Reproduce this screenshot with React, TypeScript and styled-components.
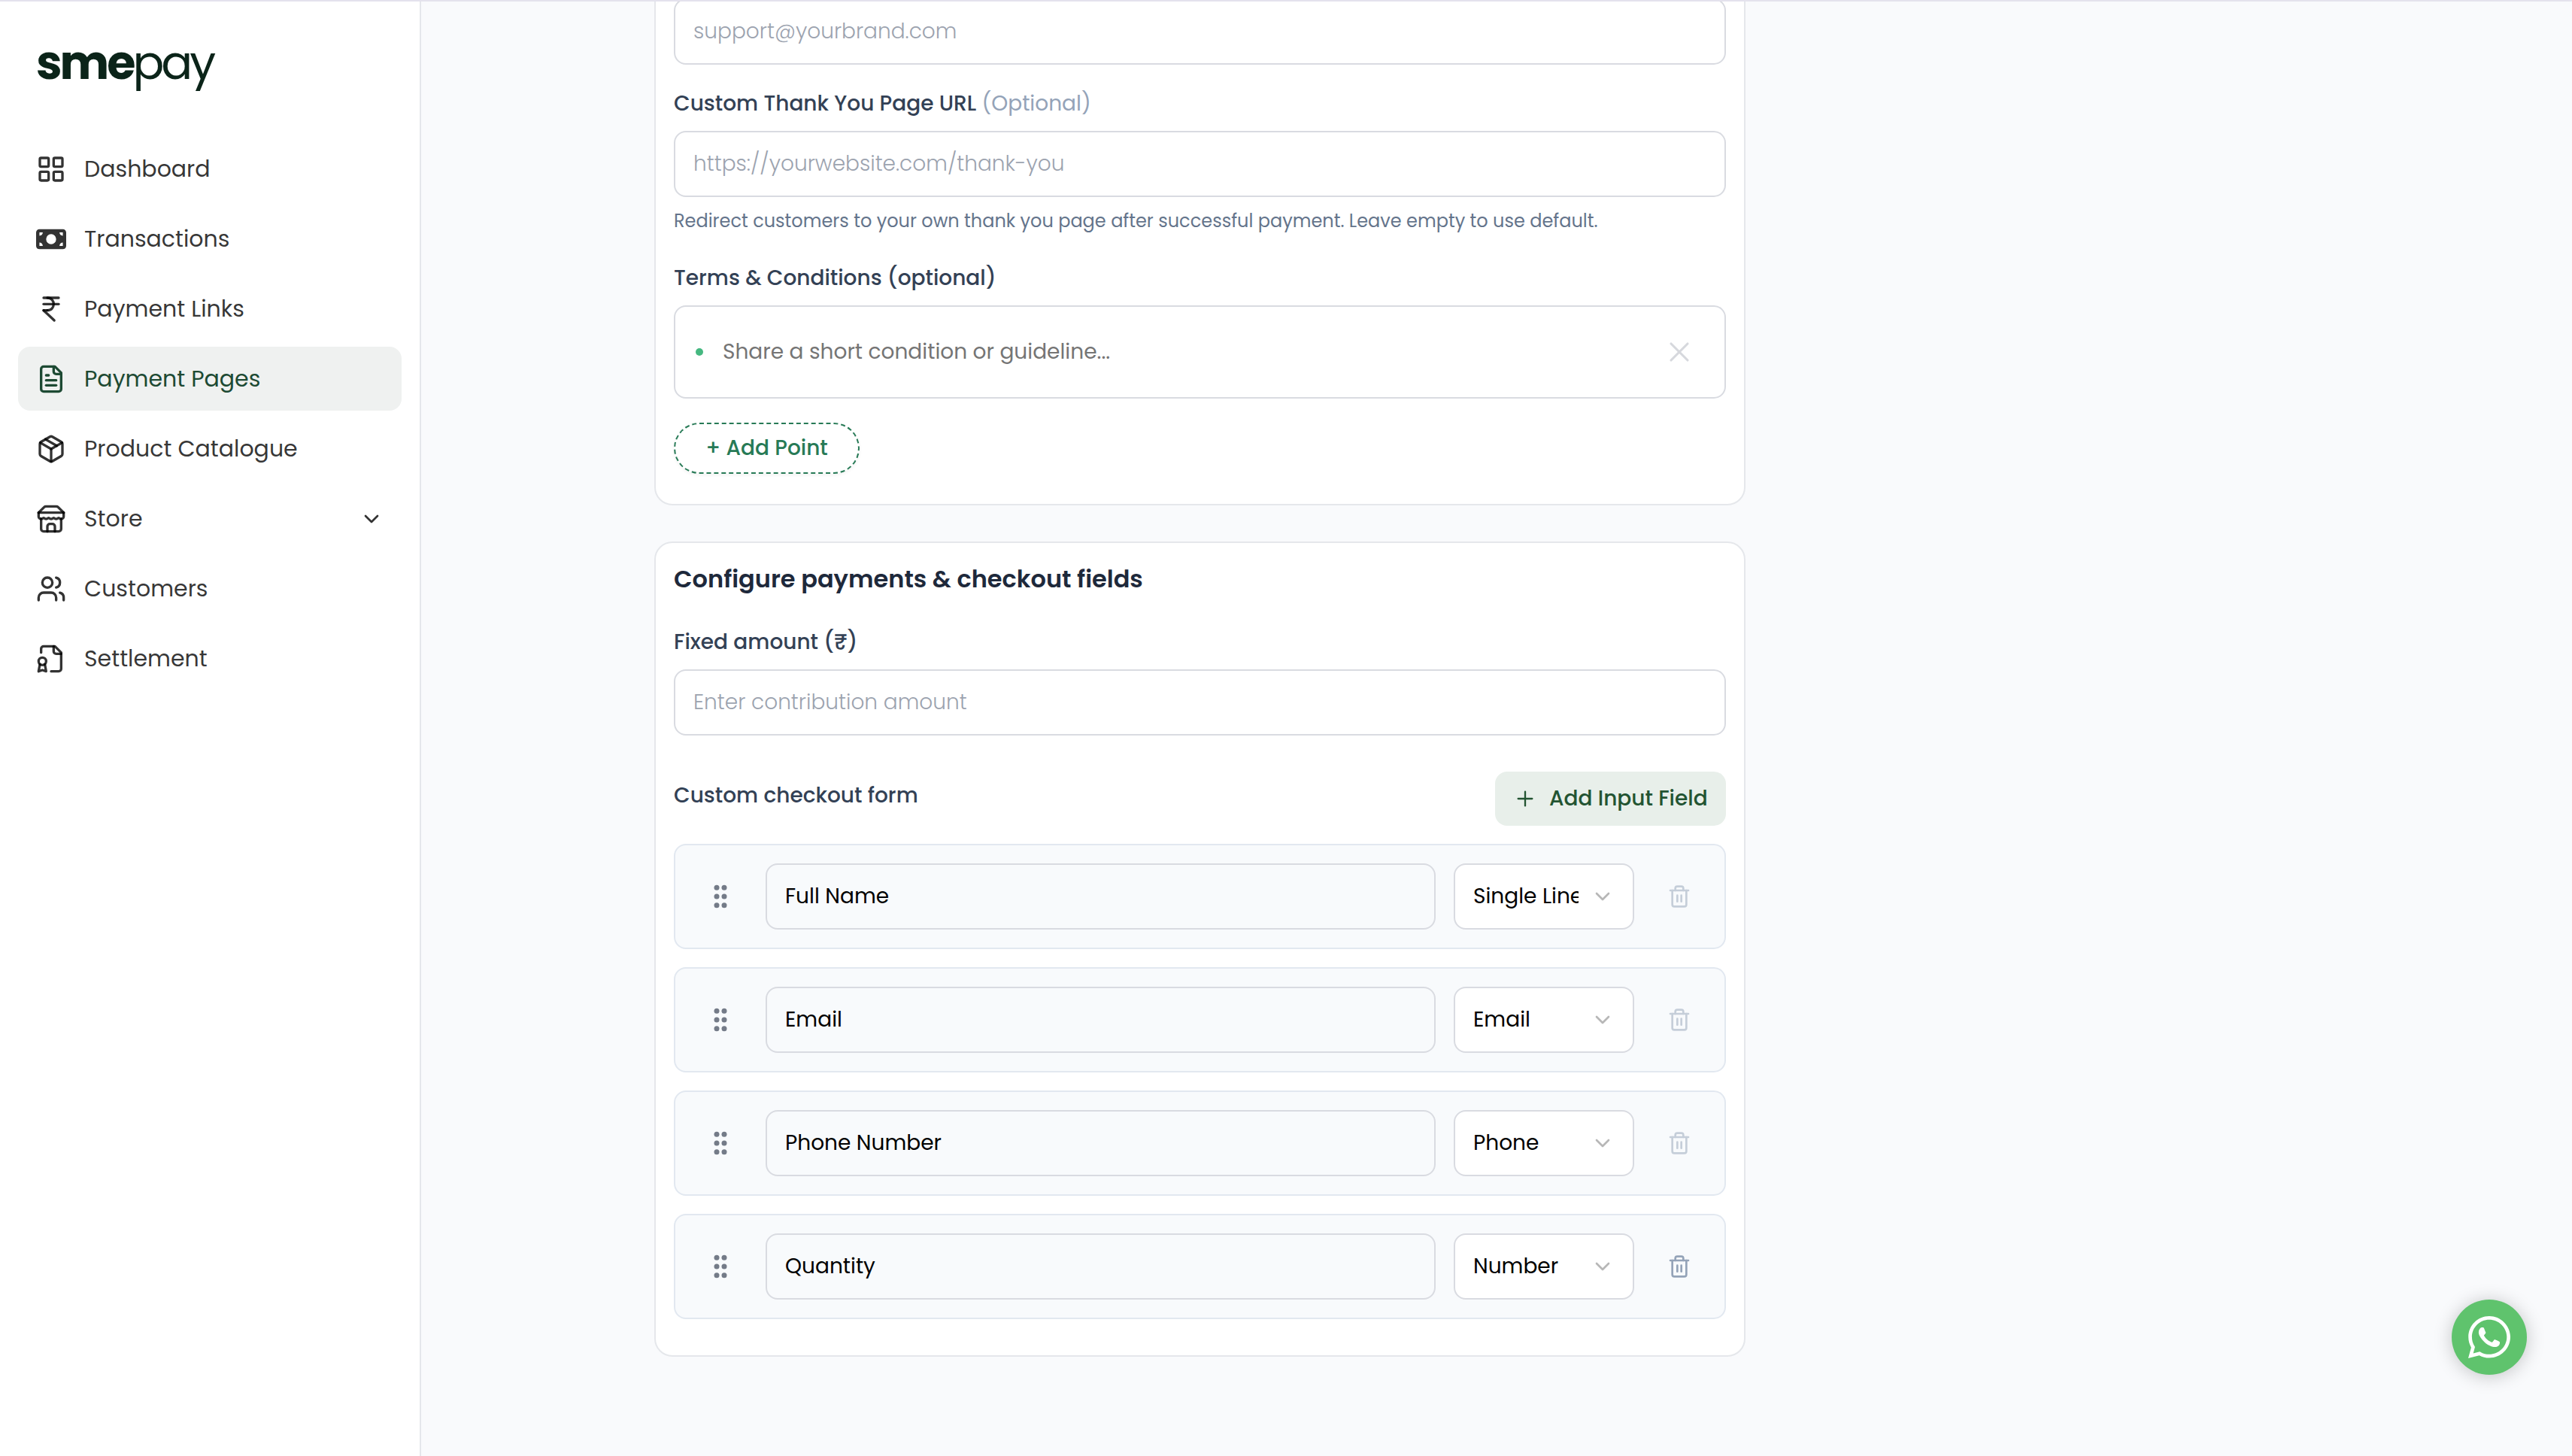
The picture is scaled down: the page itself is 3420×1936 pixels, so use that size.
import React from 'react';
import styled, { createGlobalStyle, css } from 'styled-components';
import { ChevronDown, Plus, X, Trash2, IndianRupee } from 'lucide-react';
import { FaMoneyBill } from 'react-icons/fa6';
import { FaWhatsapp } from 'react-icons/fa';

const Global = createGlobalStyle`
  *, *::before, *::after { box-sizing: border-box; }
  html, body, #root { height: 100%; }
  body {
    margin: 0;
    background: #f9fafc;
    font-family: Poppins, Inter, 'Noto Sans', sans-serif;
    font-size: 28px;
    line-height: 42px;
    color: #000;
  }
`;

const Shell = styled.div`
  display: flex;
  flex-direction: column;
  height: 1936px;
  overflow: hidden;
  border-top: 2px solid #e4e2ed;
`;
const Body = styled.div`
  display: flex;
  flex: 1;
  min-height: 0;
`;
const Text = styled.span`
  white-space: nowrap;
`;

/* Sidebar */
const Sidebar = styled.aside`
  flex: none;
  width: 560px;
  padding: 50px 24px 0;
  background: #fff;
  border-right: 2px solid #e5e7eb;
`;
const Logo = styled.div`
  display: flex;
  height: 64px;
  margin: 0 0 66px 24px;
  font-size: 62px;
  line-height: 64px;
  color: #0b2419;
`;
const LogoStrong = styled.span`
  font-weight: 700;
  letter-spacing: -3px;
`;
const LogoLight = styled.span`
  margin-left: -1px;
  font-weight: 400;
  letter-spacing: -4px;
`;
const Nav = styled.nav`
  display: flex;
  flex-direction: column;
  gap: 8px;
`;
const NavItem = styled.a<{ $active?: boolean }>`
  display: flex;
  align-items: center;
  gap: 24px;
  height: 85px;
  padding: 0 24px;
  border-radius: 16px;
  font-size: 30px;
  color: rgba(0, 0, 0, 0.8);
  ${p => p.$active && css`
    background: #eff1f0;
    color: #1d4a33;
  `}
`;
const NavLabel = styled(Text)`
  flex: 1;
`;
const IconSvg = styled.svg`
  flex: none;
  width: 40px;
  height: 40px;
  fill: none;
  stroke: currentColor;
  stroke-width: 2;
  stroke-linecap: round;
  stroke-linejoin: round;
`;

function StrokeIcon({ paths }: { paths: string[] }) {
  return (
    <IconSvg viewBox="0 0 24 24">
      {paths.map(d => <path key={d} d={d} />)}
    </IconSvg>
  );
}

const GridIcon = () => (
  <IconSvg viewBox="0 0 24 24">
    <rect x="3" y="3" width="7" height="7" rx="1" />
    <rect x="14" y="3" width="7" height="7" rx="1" />
    <rect x="14" y="14" width="7" height="7" rx="1" />
    <rect x="3" y="14" width="7" height="7" rx="1" />
  </IconSvg>
);

const pagePaths = [
  'M15 2H6a2 2 0 0 0-2 2v16a2 2 0 0 0 2 2h12a2 2 0 0 0 2-2V7Z',
  'M14 2v4a2 2 0 0 0 2 2h4',
  'M10 9H8',
  'M16 13H8',
  'M16 17H8',
];
const boxPaths = [
  'm7.5 4.27 9 5.15',
  'M21 8a2 2 0 0 0-1-1.73l-7-4a2 2 0 0 0-2 0l-7 4A2 2 0 0 0 3 8v8a2 2 0 0 0 1 1.73l7 4a2 2 0 0 0 2 0l7-4A2 2 0 0 0 21 16Z',
  'm3.3 7 8.7 5 8.7-5',
  'M12 22V12',
];
const storePaths = [
  'm2 7 4.41-4.41A2 2 0 0 1 7.83 2h8.34a2 2 0 0 1 1.42.59L22 7',
  'M4 12v8a2 2 0 0 0 2 2h12a2 2 0 0 0 2-2v-8',
  'M15 22v-4a2 2 0 0 0-2-2h-2a2 2 0 0 0-2 2v4',
  'M2 7h20',
  'M22 7v3a2 2 0 0 1-2 2a2.7 2.7 0 0 1-1.59-.63.7.7 0 0 0-.82 0A2.7 2.7 0 0 1 16 12a2.7 2.7 0 0 1-1.59-.63.7.7 0 0 0-.82 0A2.7 2.7 0 0 1 12 12a2.7 2.7 0 0 1-1.59-.63.7.7 0 0 0-.82 0A2.7 2.7 0 0 1 8 12a2.7 2.7 0 0 1-1.59-.63.7.7 0 0 0-.82 0A2.7 2.7 0 0 1 4 12a2 2 0 0 1-2-2V7',
];
const usersPaths = [
  'M16 21v-2a4 4 0 0 0-4-4H6a4 4 0 0 0-4 4v2',
  'M9 3a4 4 0 1 0 0 8a4 4 0 1 0 0-8Z',
  'M22 21v-2a4 4 0 0 0-3-3.87',
  'M16 3.13a4 4 0 0 1 0 7.75',
];
const badgePaths = [
  'M12 22h6a2 2 0 0 0 2-2V7l-5-5H6a2 2 0 0 0-2 2v3',
  'M14 2v4a2 2 0 0 0 2 2h4',
  'M5 17a3 3 0 1 0 0-6 3 3 0 0 0 0 6Z',
  'M7 16.5 8 22l-3-1-3 1 1-5.5',
];

const navItems = [
  { label: 'Dashboard', icon: <GridIcon /> },
  { label: 'Transactions', icon: <FaMoneyBill size={40} /> },
  { label: 'Payment Links', icon: <IndianRupee size={40} /> },
  { label: 'Payment Pages', icon: <StrokeIcon paths={pagePaths} />, active: true },
  { label: 'Product Catalogue', icon: <StrokeIcon paths={boxPaths} /> },
  { label: 'Store', icon: <StrokeIcon paths={storePaths} />, expandable: true },
  { label: 'Customers', icon: <StrokeIcon paths={usersPaths} /> },
  { label: 'Settlement', icon: <StrokeIcon paths={badgePaths} /> },
];

/* Form */
const Main = styled.main`
  flex: 1;
  display: flex;
  flex-direction: column;
  gap: 48px;
  min-width: 0;
  padding-left: 310px;
`;
const Card = styled.section<{ $scrolled?: boolean }>`
  display: flex;
  flex-direction: column;
  flex: none;
  width: 1451px;
  margin-top: ${p => (p.$scrolled ? '-30px' : 0)};
  padding: 24px 24px ${p => (p.$scrolled ? '40px' : '48px')};
  background: #fff;
  border: 2px solid #e5e7eb;
  border-radius: 24px;
`;
const Label = styled.div<{ $top?: number }>`
  margin-top: ${p => p.$top ?? 0}px;
  font-weight: 500;
  color: #334155;
`;
const Optional = styled(Text)`
  font-weight: 400;
  color: #94a3b8;
`;
const Field = styled.div<{ $top?: number }>`
  display: flex;
  align-items: center;
  height: 88px;
  margin-top: ${p => p.$top ?? 0}px;
  padding: 0 24px;
  border: 2px solid #d9dbe1;
  border-radius: 16px;
`;
const Placeholder = styled(Text)`
  font-weight: 300;
  color: #9ca3af;
`;
const Helper = styled.div`
  margin-top: 14px;
  font-size: 24px;
  line-height: 36px;
  color: #64748b;
`;
const TermRow = styled(Field)`
  height: 124px;
  padding: 0 38px 0 27px;
  color: #757575;
`;
const Bullet = styled.span`
  flex: none;
  width: 10px;
  height: 10px;
  margin-right: 26px;
  border-radius: 50%;
  background: #45b880;
`;
const TermText = styled(Text)`
  flex: 1;
`;
const AddPoint = styled.button`
  align-self: flex-start;
  width: 247px;
  height: 68px;
  margin-top: 32px;
  padding: 0;
  border: 2px dashed #277a56;
  border-radius: 34px;
  background: #fff;
  box-shadow: 0 2px 4px rgba(0, 0, 0, 0.05);
  font: inherit;
  font-weight: 500;
  line-height: 60px;
  color: #277a56;
`;
const Heading = styled.h2`
  margin: 0;
  font-size: 32px;
  font-weight: 600;
  line-height: 48px;
  color: #1e293b;
`;
const FormHeader = styled.div`
  display: flex;
  justify-content: space-between;
  align-items: flex-start;
  margin: 48px 0 24px;
`;
const AddField = styled.button`
  display: flex;
  align-items: center;
  gap: 16px;
  width: 307px;
  height: 72px;
  padding: 0 0 0 24px;
  border: 0;
  border-radius: 16px;
  background: #e8efea;
  font: inherit;
  font-weight: 500;
  color: #235432;
`;
const Rows = styled.div`
  display: flex;
  flex-direction: column;
  gap: 24px;
`;
const FieldRow = styled.div`
  display: grid;
  grid-template-columns: 72px 1fr 240px 72px;
  column-gap: 24px;
  align-items: center;
  height: 140px;
  padding: 0 24px;
  background: #f8fafc;
  border: 2px solid #e2e8f0;
  border-radius: 16px;
`;
const Handle = styled.div`
  display: flex;
  justify-content: center;
`;
const Select = styled(Field)`
  gap: 16px;
  background: #fff;
  svg { flex: none; }
`;
const SelectValue = styled(Text)`
  flex: 1;
  min-width: 0;
  overflow: hidden;
`;
const Remove = styled.div<{ $disabled: boolean }>`
  display: flex;
  justify-content: center;
  color: #94a3b8;
  svg { opacity: ${p => (p.$disabled ? 0.5 : 1)}; }
`;
const WhatsApp = styled.div`
  position: fixed;
  right: 60px;
  bottom: 108px;
  display: flex;
  align-items: center;
  justify-content: center;
  width: 100px;
  height: 100px;
  border-radius: 50%;
  background: #5fc36d;
  box-shadow: 0 2px 24px rgba(0, 0, 0, 0.22);
  color: #fff;
`;

const DragDots = () => (
  <svg width="24" height="36" viewBox="0 0 24 36" fill="#747b88">
    {[6.3, 18, 29.7].map(y => (
      <React.Fragment key={y}>
        <circle cx="7" cy={y} r="3.5" />
        <circle cx="17" cy={y} r="3.5" />
      </React.Fragment>
    ))}
  </svg>
);

const rows = [
  { name: 'Full Name', type: 'Single Line', locked: true },
  { name: 'Email', type: 'Email', locked: true },
  { name: 'Phone Number', type: 'Phone', locked: true },
  { name: 'Quantity', type: 'Number', locked: false },
];

export default function App() {
  return (
    <Shell>
      <Global />
      <Body>
        <Sidebar>
          <Logo><LogoStrong>sme</LogoStrong><LogoLight>pay</LogoLight></Logo>
          <Nav>
            {navItems.map(item => (
              <NavItem key={item.label} $active={item.active}>
                {item.icon}
                <NavLabel>{item.label}</NavLabel>
                {item.expandable && <ChevronDown size={32} />}
              </NavItem>
            ))}
          </Nav>
        </Sidebar>
        <Main>
          <Card $scrolled>
            <Field><Placeholder>support@yourbrand.com</Placeholder></Field>
            <Label $top={31}>
              <Text>Custom Thank You Page URL </Text>
              <Optional>(Optional)</Optional>
            </Label>
            <Field $top={15}><Placeholder>https://yourwebsite.com/thank-you</Placeholder></Field>
            <Helper>
              <Text>
                Redirect customers to your own thank you page after successful payment. Leave empty to use default.
              </Text>
            </Helper>
            <Label $top={37}><Text>Terms &amp; Conditions (optional)</Text></Label>
            <TermRow $top={15}>
              <Bullet />
              <TermText>Share a short condition or guideline...</TermText>
              <X size={44} strokeWidth={1.7} color="#d6d8dd" />
            </TermRow>
            <AddPoint><Text>+ Add Point</Text></AddPoint>
          </Card>
          <Card>
            <Heading><Text>Configure payments &amp; checkout fields</Text></Heading>
            <Label $top={39}><Text>Fixed amount (₹)</Text></Label>
            <Field $top={15}><Placeholder>Enter contribution amount</Placeholder></Field>
            <FormHeader>
              <Label $top={11}><Text>Custom checkout form</Text></Label>
              <AddField>
                <Plus size={32} strokeWidth={1.75} />
                <Text>Add Input Field</Text>
              </AddField>
            </FormHeader>
            <Rows>
              {rows.map(row => (
                <FieldRow key={row.name}>
                  <Handle><DragDots /></Handle>
                  <Field><Text>{row.name}</Text></Field>
                  <Select>
                    <SelectValue>{row.type}</SelectValue>
                    <ChevronDown size={32} color="#b7b7b7" />
                  </Select>
                  <Remove $disabled={row.locked}><Trash2 size={32} /></Remove>
                </FieldRow>
              ))}
            </Rows>
          </Card>
        </Main>
      </Body>
      <WhatsApp><FaWhatsapp size={64} /></WhatsApp>
    </Shell>
  );
}
